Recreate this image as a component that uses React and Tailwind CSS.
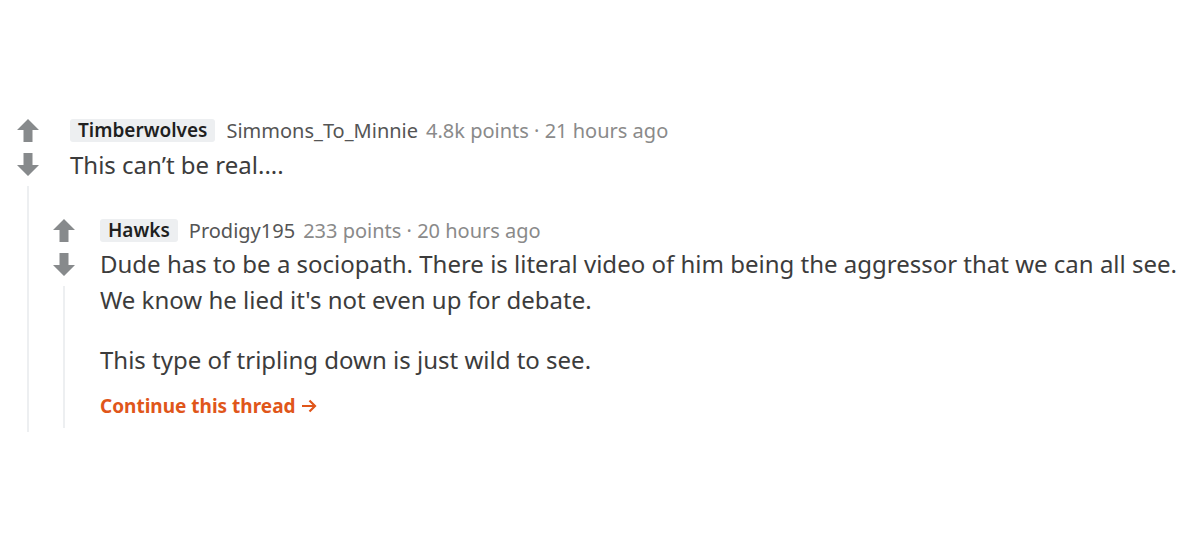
const font = { fontFamily: '"Noto Sans", "Open Sans", sans-serif' }

function UpArrow() {
  return (
    <svg width="22" height="23" viewBox="0 0 22 23" className="block">
      <path d="M11 0 L22 11 L15.5 11 L15.5 23 L6.5 23 L6.5 11 L0 11 Z" fill="#878a8c" />
    </svg>
  )
}

function DownArrow() {
  return (
    <svg width="22" height="23" viewBox="0 0 22 23" className="block">
      <path d="M11 23 L22 12 L15.5 12 L15.5 0 L6.5 0 L6.5 12 L0 12 Z" fill="#878a8c" />
    </svg>
  )
}

function Meta({ flair, user, points, time }) {
  return (
    <div className="flex items-center h-[23px] whitespace-nowrap">
      <span className="bg-[#edeff1] text-[#1f1f1f] font-semibold text-[19px] leading-[23px] pl-[8px] pr-[8px] rounded-[3px]">
        {flair}
      </span>
      <span className="ml-[11px] text-[#555555] text-[20px] leading-[23px]">{user}</span>
      <span className="ml-[8px] text-[#8a8a8a] text-[20px] leading-[23px]">{points} · {time}</span>
    </div>
  )
}

export default function App() {
  return (
    <div className="w-[1200px] h-[553px] bg-white overflow-hidden pt-[119px] pl-[17px]" style={font}>
      <div className="flex">
        {/* parent vote column */}
        <div className="w-[22px] flex flex-col items-center">
          <UpArrow />
          <div className="h-[11px]" />
          <DownArrow />
          <div className="w-[2px] bg-[#edeff1] mt-[10px] h-[246px]" />
        </div>

        <div className="flex-1">
          <div className="pl-[31px]">
            <Meta flair="Timberwolves" user="Simmons_To_Minnie" points="4.8k points" time="21 hours ago" />
            <p className="text-[24px] leading-[36px] text-[#3c3c3c] mt-[5px]">This can’t be real....</p>
          </div>

          {/* reply */}
          <div className="flex mt-[36px] pl-[14px]">
            <div className="w-[22px] flex flex-col items-center">
              <UpArrow />
              <div className="h-[11px]" />
              <DownArrow />
              <div className="w-[2px] bg-[#edeff1] mt-[10px] h-[142px]" />
            </div>
            <div className="flex-1 pl-[25px]">
              <Meta flair="Hawks" user="Prodigy195" points="233 points" time="20 hours ago" />
              <div className="text-[24px] leading-[36px] text-[#3c3c3c] mt-[4px]">
                <p>Dude has to be a sociopath. There is literal video of him being the aggressor that we can all see. We know he lied it's not even up for debate.</p>
                <p className="mt-[24px]">This type of tripling down is just wild to see.</p>
              </div>
              <a className="flex items-center mt-[16px] text-[#e0561a] font-bold text-[19px] leading-[24px]">
                Continue this thread
                <svg width="16" height="16" viewBox="0 0 16 16" className="ml-[5px]">
                  <path d="M1 8 H14 M8.5 2.5 L14 8 L8.5 13.5" stroke="#e0561a" strokeWidth="2.2" fill="none" />
                </svg>
              </a>
            </div>
          </div>
        </div>
      </div>
    </div>
  )
}
